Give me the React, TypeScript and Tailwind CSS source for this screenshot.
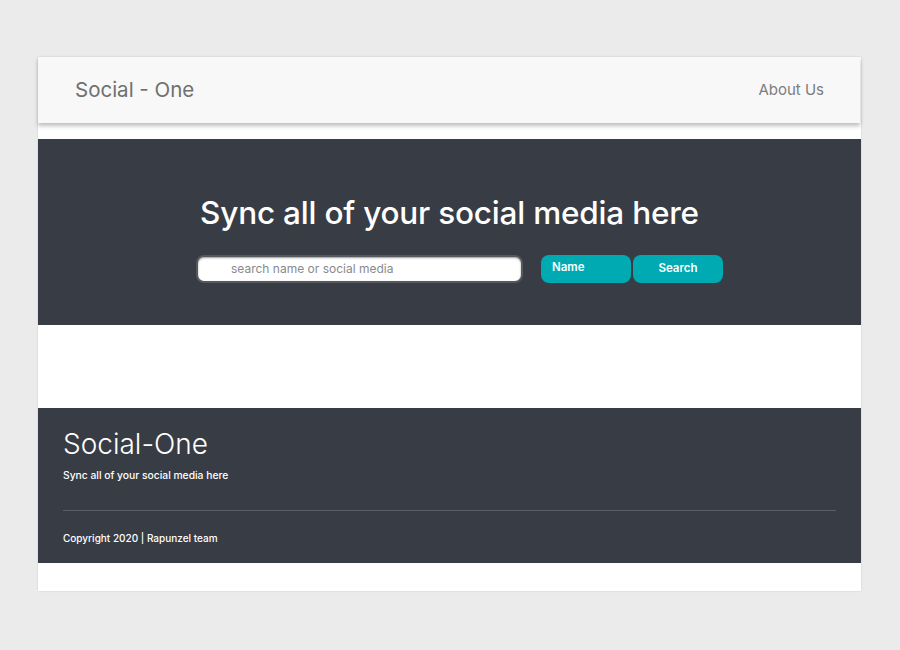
export default function App() {
  return (
    <div className="min-h-[650px] w-full bg-[#ebebeb] pt-[57px] px-[38px] pb-[59px]" style={{ fontFamily: "Inter, 'Noto Sans', sans-serif" }}>
      <div className="w-[823px] bg-white shadow-[0_0_2px_rgba(0,0,0,0.12)]">
        <nav className="h-[66px] bg-[#f8f8f8] flex items-center justify-between pl-[37px] pr-[36px] shadow-[0_3px_4px_rgba(0,0,0,0.25)] mr-[1px]">
          <span className="text-[20.5px] text-[#707070]">Social - One</span>
          <span className="text-[15px] text-[#7d7d7d]">About Us</span>
        </nav>
        <div className="h-[16px]" />
        <section className="h-[186px] bg-[#383c45] flex flex-col items-center pt-[54px]">
          <h1 className="text-[31.5px] font-medium text-white leading-[40px] tracking-[-0.2px]">Sync all of your social media here</h1>
          <div className="mt-[22px] ml-[20px] flex items-center">
            <div className="w-[327px] h-[28px] bg-white rounded-[8px] border-2 border-[#55585c] shadow-[inset_0_1px_2px_rgba(0,0,0,0.4)] flex items-center pl-[33px]">
              <span className="text-[12px] text-[#8a8a8a]">search name or social media</span>
            </div>
            <button className="ml-[18px] w-[90px] h-[28px] bg-[#00aab3] rounded-[8px] text-white text-[11.5px] font-semibold text-left pl-[11px] pb-[3px]">Name</button>
            <button className="ml-[2px] w-[90px] h-[28px] bg-[#00aab3] rounded-[8px] text-white text-[11.5px] font-semibold">Search</button>
          </div>
        </section>
        <div className="h-[83px]" />
        <footer className="h-[155px] bg-[#383c45] px-[25px] pt-[19px]">
          <div className="text-[28px] font-light text-white leading-[34px]">Social-One</div>
          <div className="mt-[7px] text-[10.3px] font-medium text-white">Sync all of your social media here</div>
          <div className="mt-[27px] h-[1px] bg-[#5a5e66]" />
          <div className="mt-[20px] text-[10px] font-medium text-white">Copyright 2020 | Rapunzel team</div>
        </footer>
        <div className="h-[28px]" />
      </div>
    </div>
  );
}
